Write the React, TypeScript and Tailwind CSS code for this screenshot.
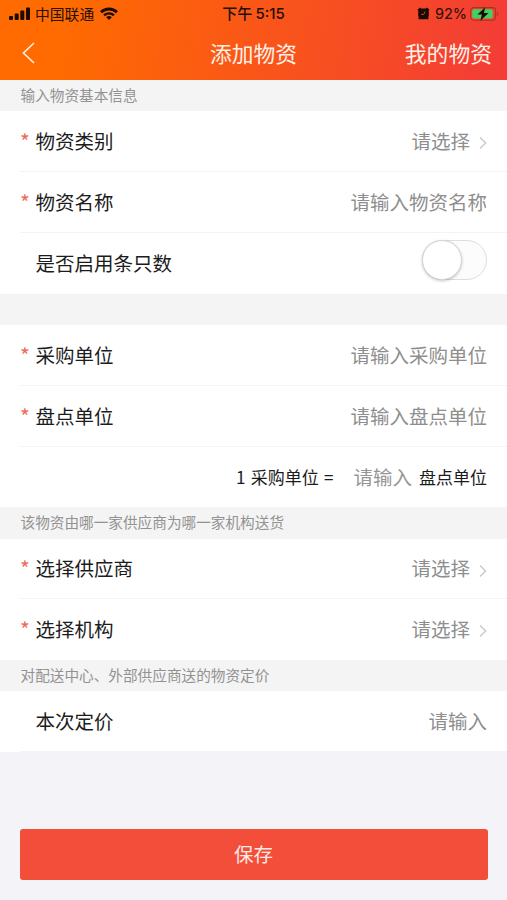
import React from 'react';

type RowProps = {
  label: string;
  required?: boolean;
  height?: string;
  line?: boolean;
  children: React.ReactNode;
};

function Row({ label, required = false, height = 'h-[61px]', line = true, children }: RowProps) {
  return (
    <div className={`${height} bg-white pl-5`}>
      <div
        className={`flex h-full items-center border-b pr-5 pb-px text-[19.5px] leading-[28px] ${
          line ? 'border-[#f3f3f3]' : 'border-transparent'
        }`}
      >
        <span className="w-[15.5px] text-[21px] text-[#ee6a5c]">{required ? '*' : ''}</span>
        <span className="text-[#1c1c1c]">{label}</span>
        <div className="ml-auto flex items-center text-[#8e8e8e]">{children}</div>
      </div>
    </div>
  );
}

function Chevron() {
  return (
    <svg className="mt-[5px] ml-[9px] h-[14px] w-2" viewBox="0 0 8 14" fill="none">
      <path d="M1 1.5 6.6 7 1 12.5" stroke="#c9c9c9" strokeWidth="1.4" />
    </svg>
  );
}

function Section({ text, height = 'h-[31px]' }: { text?: string; height?: string }) {
  return (
    <div className={`${height} flex items-center bg-[#f4f4f4] pb-0.5 pl-[20.5px] text-[14.65px] leading-5 text-[#929292]`}>
      {text}
    </div>
  );
}

function StatusBar() {
  return (
    <div className="grid h-7 grid-cols-3 items-center pb-px text-[15px] leading-5 text-[#251005]">
      <div className="flex items-center pl-[9px]">
        <svg className="h-[14px] w-[22px]" viewBox="0 0 22 14" fill="#1c0b02">
          <rect x="0" y="9" width="4" height="4" rx="1" />
          <rect x="5.7" y="6.5" width="4" height="6.5" rx="1" />
          <rect x="11.3" y="3.5" width="4" height="9.5" rx="1" />
          <rect x="17" y="0.5" width="4" height="12.5" rx="1" />
        </svg>
        <span className="ml-[4px] text-[14.8px]">中国联通</span>
        <svg className="ml-[6px] h-[13px] w-[18px]" viewBox="0 0 18 13" fill="none" stroke="#1c0b02">
          <path d="M1 5.2a11.6 11.6 0 0 1 16 0" strokeWidth="2.8" />
          <path d="M4.1 8.3a7.2 7.2 0 0 1 9.8 0" strokeWidth="2.4" />
          <path d="M9 13 6.2 10.2a4.2 4.2 0 0 1 5.6 0Z" fill="#1c0b02" stroke="none" />
        </svg>
      </div>
      <div className="text-center font-medium">
        下午 <span className="font-['Inter']">5:15</span>
      </div>
      <div className="flex items-center justify-end pr-[7px]">
        <svg className="h-[13px] w-[13px]" viewBox="0 0 13 13">
          <rect x="1.2" y="1.6" width="10.6" height="10.6" rx="4" fill="#1c0b02" />
          <path d="M1.2 3.6 3.8 1.2M11.8 3.6 9.2 1.2M2 12.2l1.6-1.8M11 12.2l-1.6-1.8" stroke="#1c0b02" strokeWidth="2" />
          <path d="M8.2 4.5 6.7 7.4H4.2" fill="none" stroke="#c44a20" strokeWidth="1" />
        </svg>
        <span className="ml-[5px] font-['Inter'] text-[14.5px]">92%</span>
        <svg className="ml-[3px] h-[14px] w-[30px]" viewBox="0 0 30 14">
          <rect x="0.6" y="0.6" width="25" height="12.6" rx="3.4" fill="none" stroke="#a3361c" strokeWidth="1.1" />
          <rect x="2.2" y="2.2" width="20.5" height="9.4" rx="2" fill="#45cf63" />
          <path d="M27.2 5v4c1.6-.5 1.6-3.5 0-4Z" fill="#a3361c" />
          <path d="M15.2.3 7.4 7.6h4.5L10.4 13.7 18.5 6h-4.6Z" fill="#160b04" />
        </svg>
      </div>
    </div>
  );
}

export default function App() {
  return (
    <div className="h-[900px] w-[507px] overflow-hidden bg-[#f3f3f8] font-['Noto_Sans_CJK_SC',sans-serif]">
      <header className="h-20 bg-linear-[98deg,#ff6b00_12%,#f33d36_98%]">
        <StatusBar />
        <div className="grid h-[52px] grid-cols-3 items-center pb-0.5 text-[21.8px] leading-8 text-[#fff0e6]">
          <svg className="ml-[22px] h-[22px] w-[13px]" viewBox="0 0 13 22" fill="none">
            <path d="M12 1 1.5 11 12 21" stroke="#ffeede" strokeWidth="1.7" />
          </svg>
          <h1 className="text-center">添加物资</h1>
          <span className="pr-[15px] text-right">我的物资</span>
        </div>
      </header>

      <Section text="输入物资基本信息" />
      <Row label="物资类别" required>
        请选择
        <Chevron />
      </Row>
      <Row label="物资名称" required>请输入物资名称</Row>
      <Row label="是否启用条只数" line={false}>
        <span className="mb-[5px] flex h-10 w-[65px] rounded-full border border-[#dedede] bg-[#fcfcfc]">
          <span className="-mt-px -ml-px h-10 w-10 rounded-full border border-[#d4d4d4] bg-white shadow-[0_1px_3px_rgba(0,0,0,0.22)]" />
        </span>
      </Row>

      <Section />
      <Row label="采购单位" required>请输入采购单位</Row>
      <Row label="盘点单位" required>请输入盘点单位</Row>
      <div className="flex h-[60px] items-center justify-end bg-white pr-5 pb-px text-[17px] leading-7 text-[#1c1c1c]">
        <span className="[word-spacing:1.5px]">1 采购单位 =</span>
        <span className="ml-5 text-[19.5px] text-[#969696]">请输入</span>
        <span className="ml-[7px]">盘点单位</span>
      </div>

      <Section text="该物资由哪一家供应商为哪一家机构送货" height="h-8" />
      <Row label="选择供应商" required height="h-[60px]">
        请选择
        <Chevron />
      </Row>
      <Row label="选择机构" required line={false}>
        请选择
        <Chevron />
      </Row>

      <Section text="对配送中心、外部供应商送的物资定价" />
      <Row label="本次定价">请输入</Row>

      <div className="px-[19.5px] pt-[77px]">
        <button className="block h-[51px] w-full rounded-[3px] bg-[#f24e3a] pb-0.5 text-[19.5px] leading-[49px] text-[#ffe9e4]">
          保存
        </button>
      </div>
    </div>
  );
}
